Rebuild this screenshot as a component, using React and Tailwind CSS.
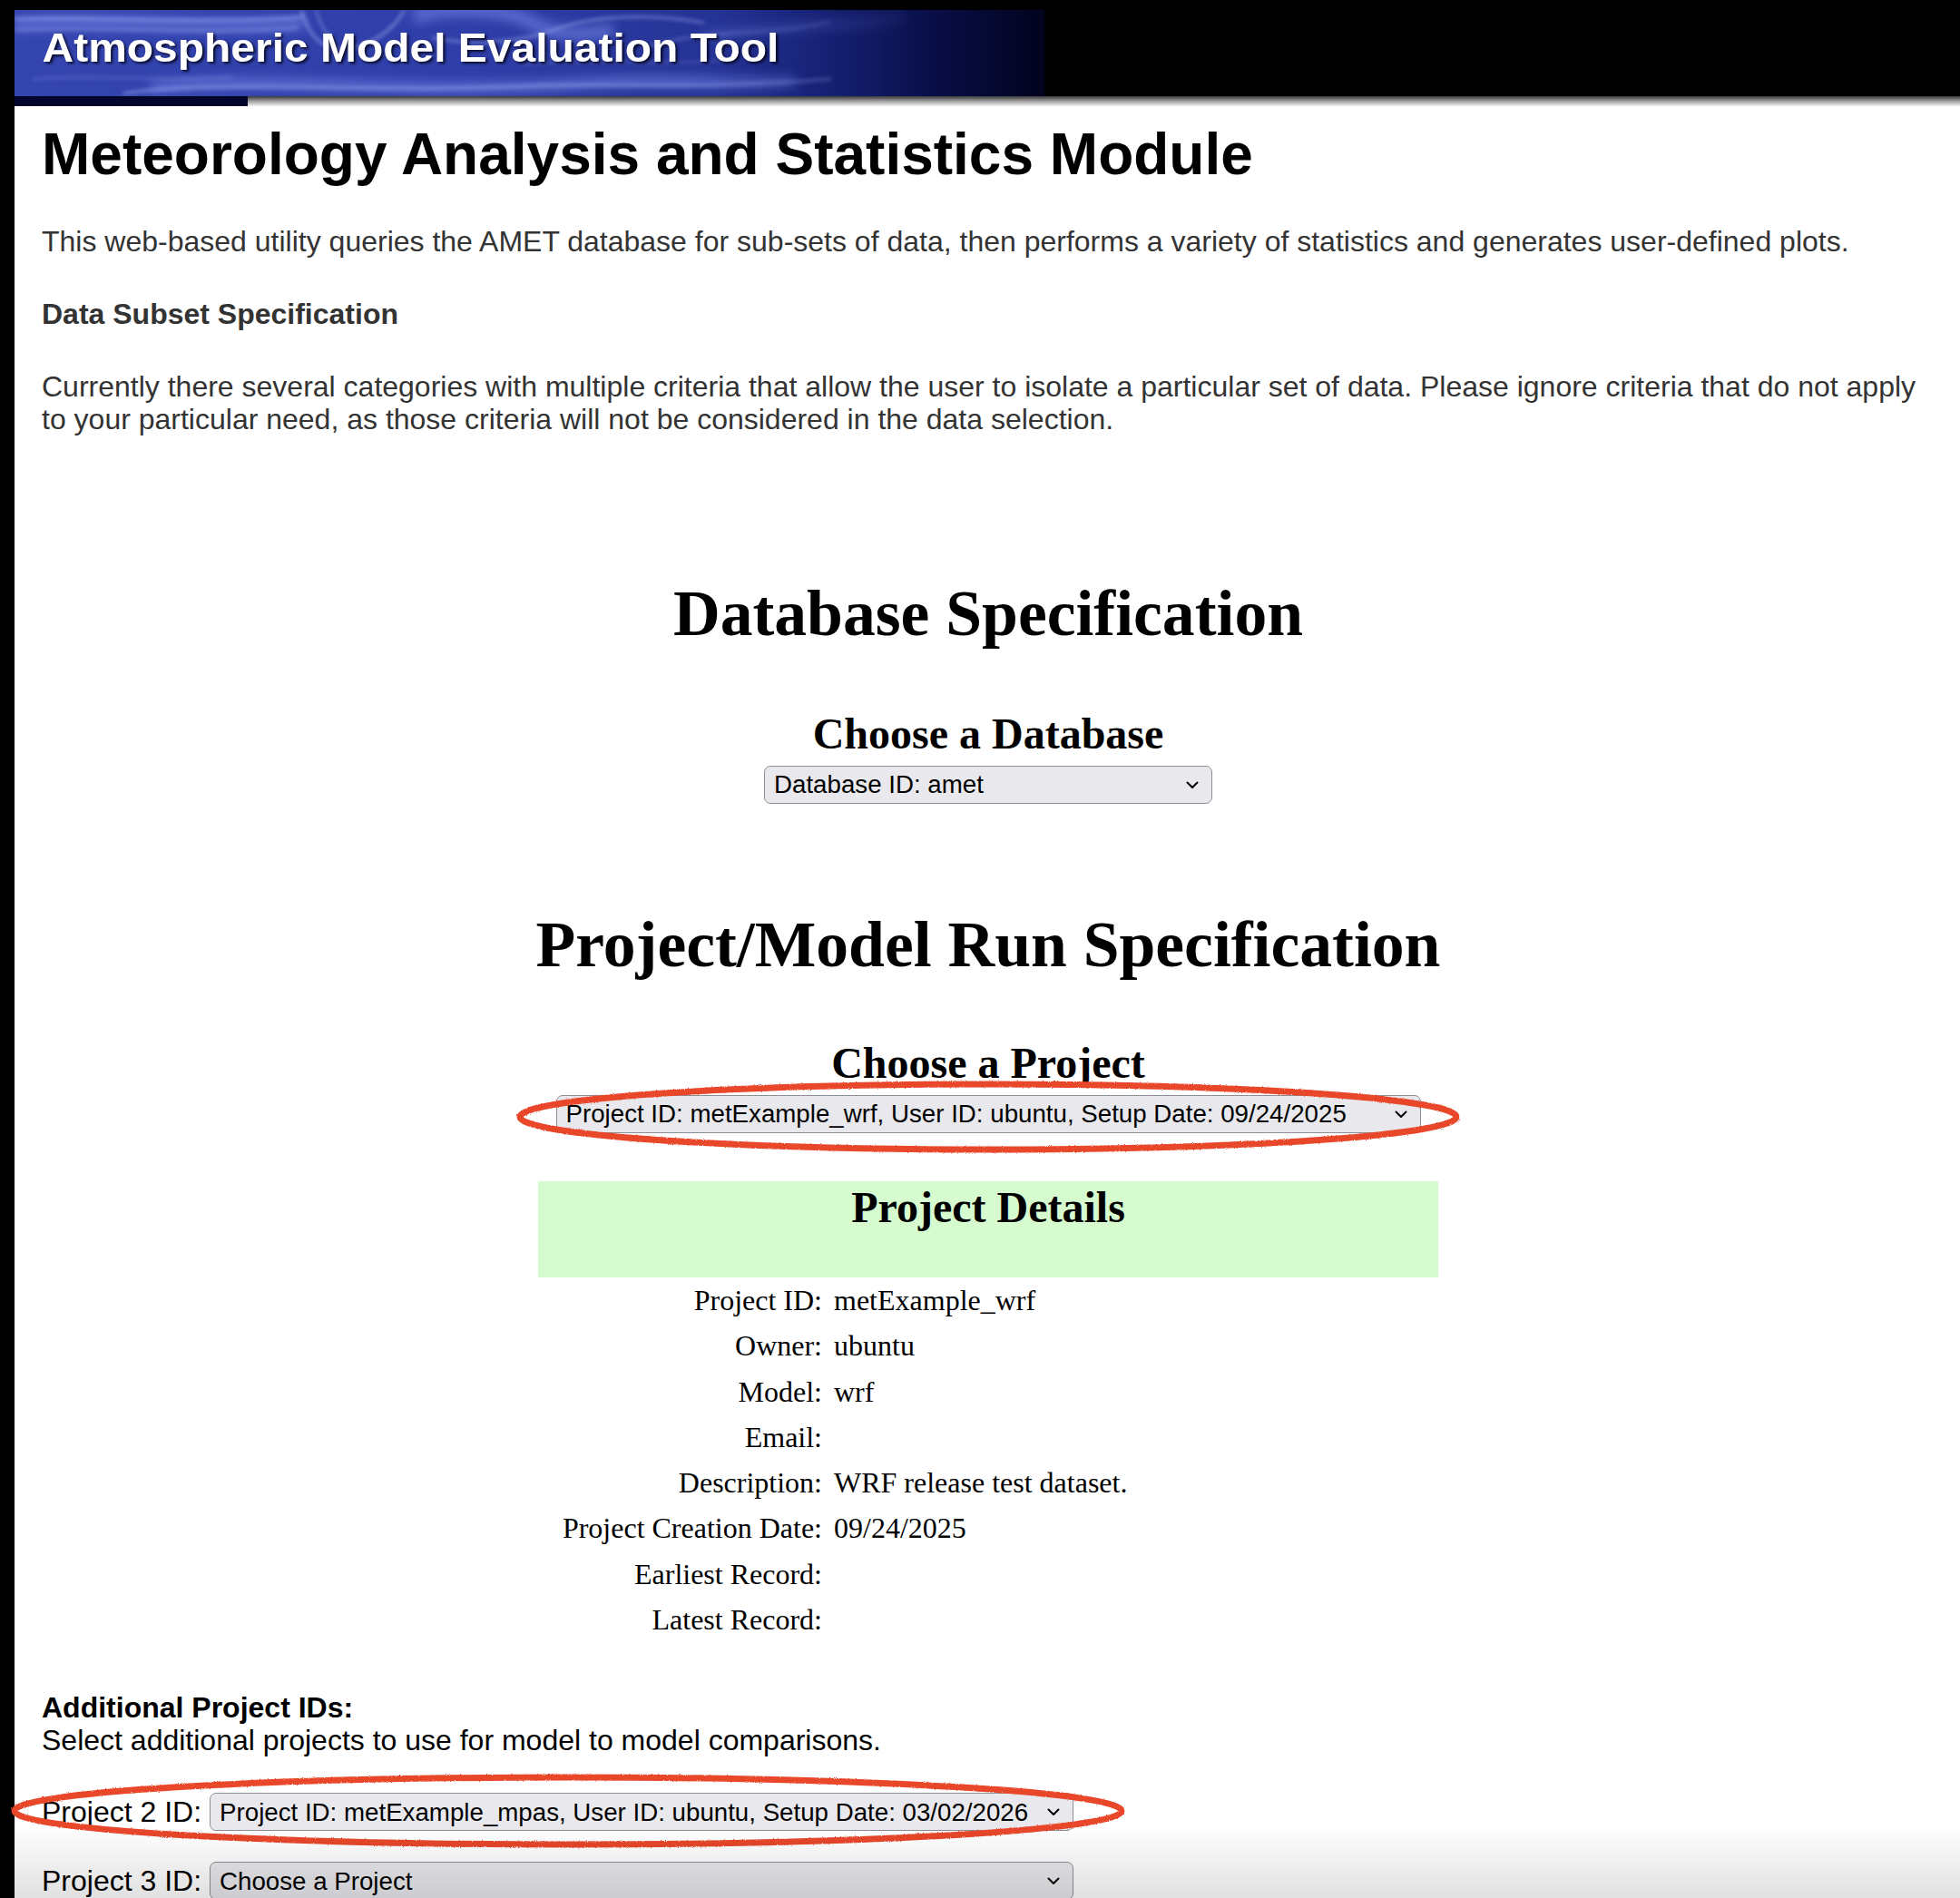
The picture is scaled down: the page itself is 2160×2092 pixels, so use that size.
import React from 'react';

const details = [
  ['Project ID:', 'metExample_wrf'],
  ['Owner:', 'ubuntu'],
  ['Model:', 'wrf'],
  ['Email:', ''],
  ['Description:', 'WRF release test dataset.'],
  ['Project Creation Date:', '09/24/2025'],
  ['Earliest Record:', ''],
  ['Latest Record:', ''],
];

const Select = ({ value, className }) => (
  <div
    className={`flex items-center justify-between h-[42px] rounded-[7px] border-[1.5px] border-[#8e8e96] bg-[#e9e9ed] pl-[10px] pr-[14px] text-[27.7px] leading-none text-black whitespace-nowrap ${className}`}
  >
    <span>{value}</span>
    <svg width="14" height="9" viewBox="0 0 14 9" className="shrink-0">
      <path d="M1.5 1.5 L7 7 L12.5 1.5" fill="none" stroke="#000" strokeWidth="2" strokeLinecap="round" strokeLinejoin="round" />
    </svg>
  </div>
);

// hand drawn red ring used as annotation over the selects
const Ring = ({ id, w, h, className }) => (
  <svg className={`pointer-events-none absolute ${className}`} width={w} height={h} viewBox={`0 0 ${w} ${h}`}>
    <defs>
      <filter id={id} x="-5%" y="-20%" width="110%" height="140%">
        <feTurbulence type="fractalNoise" baseFrequency="1.2" numOctaves="2" seed="3" />
        <feDisplacementMap in="SourceGraphic" scale="2.5" />
      </filter>
    </defs>
    <ellipse
      cx={w / 2}
      cy={h / 2}
      rx={w / 2 - 6}
      ry={h / 2 - 6}
      fill="none"
      stroke="#e8462c"
      strokeWidth="7"
      filter={`url(#${id})`}
    />
  </svg>
);

const Banner = () => (
  <div className="relative w-[1135px] h-[95px] overflow-hidden">
    <svg className="absolute inset-0" width="1135" height="95" viewBox="0 0 1135 95">
      <defs>
        <linearGradient id="bnBase" x1="0" y1="0" x2="1" y2="0">
          <stop offset="0" stopColor="#3445b0" />
          <stop offset="0.45" stopColor="#2f3ea8" />
          <stop offset="0.68" stopColor="#253396" />
          <stop offset="0.8" stopColor="#151f70" />
          <stop offset="0.9" stopColor="#080d44" />
          <stop offset="1" stopColor="#02031e" />
        </linearGradient>
        <linearGradient id="bnFade" x1="0" y1="0" x2="1" y2="0">
          <stop offset="0" stopColor="#fff" />
          <stop offset="0.65" stopColor="#fff" />
          <stop offset="0.88" stopColor="#fff" stopOpacity="0.25" />
          <stop offset="1" stopColor="#fff" stopOpacity="0" />
        </linearGradient>
        <mask id="bnMask">
          <rect width="1135" height="95" fill="url(#bnFade)" />
        </mask>
        <filter id="bnBlur">
          <feGaussianBlur stdDeviation="2.2" />
        </filter>
        <filter id="bnBlurWide">
          <feGaussianBlur stdDeviation="6" />
        </filter>
      </defs>
      <rect width="1135" height="95" fill="url(#bnBase)" />
      <g mask="url(#bnMask)" fill="none">
        <g filter="url(#bnBlurWide)" stroke="#7386e6" strokeOpacity="0.6">
          <path d="M0 16 C90 8 200 22 320 14" strokeWidth="14" />
          <path d="M150 86 C280 70 430 96 640 80 C720 74 800 84 860 78" strokeWidth="12" />
          <path d="M440 8 C470 -4 540 -4 570 14 C590 26 620 30 660 22" strokeWidth="16" />
          <path d="M760 30 C820 16 900 22 980 8" strokeWidth="10" strokeOpacity="0.35" />
        </g>
        <g filter="url(#bnBlur)" stroke="#9eacf2" strokeOpacity="0.6">
          <path d="M0 10 C80 6 190 16 318 8" strokeWidth="3" />
          <path d="M0 22 C100 18 210 28 312 20" strokeWidth="2" />
          <path d="M316 0 C322 18 328 32 344 40 C368 50 410 34 430 0" strokeWidth="3" />
          <path d="M332 0 C336 14 342 26 352 32" strokeWidth="2" />
          <path d="M460 30 C500 40 560 36 600 20 C640 6 700 4 760 14" strokeWidth="2.5" />
          <path d="M120 92 C240 76 380 92 560 84 C660 80 760 88 900 76" strokeWidth="3" />
          <path d="M20 76 C90 70 160 80 240 74" strokeWidth="2" strokeOpacity="0.35" />
          <path d="M700 40 C760 20 840 30 900 12" strokeWidth="2.5" strokeOpacity="0.4" />
          <path d="M560 60 C620 52 700 62 780 56" strokeWidth="2" strokeOpacity="0.3" />
        </g>
      </g>
    </svg>
    <div className="relative pl-[28px] pt-[17px] text-[44px] font-bold leading-[50px] text-white origin-left scale-x-[1.09] whitespace-nowrap [text-shadow:2px_2px_3px_rgba(0,0,20,0.85)]">
      Atmospheric Model Evaluation Tool
    </div>
  </div>
);

export default function App() {
  return (
    <div className="min-h-screen border-l-[16px] border-black bg-white [font-family:'Liberation_Sans',Arial,sans-serif]">
      <header className="bg-black pt-[11px]">
        <Banner />
      </header>
      <div className="flex h-[11px]">
        <div className="w-[257px] bg-[#03052c]" />
        <div className="flex-1 bg-linear-to-b from-[#3a3a3a] via-[#a0a0a0] to-[#f5f5f5]" />
      </div>

      <main className="pl-[30px] pr-[28px] pb-[40px]">
        <h1 className="mt-[16px] text-[64px] font-bold leading-[74px] text-black">
          Meteorology Analysis and Statistics Module
        </h1>
        <p className="mt-[41px] text-[32px] leading-[36px] text-[#333]">
          This web-based utility queries the AMET database for sub-sets of data, then performs a variety of statistics and generates user-defined plots.
        </p>
        <p className="mt-[44px] text-[32px] font-bold leading-[36px] text-[#333]">Data Subset Specification</p>
        <p className="mt-[44px] text-[32px] leading-[36px] text-[#333]">
          Currently there several categories with multiple criteria that allow the user to isolate a particular set of data. Please ignore criteria that do not apply to your particular need, as those criteria will not be considered in the data selection.
        </p>

        <section className="text-center text-black [font-family:'Liberation_Serif','Times_New_Roman',serif]">
          <h2 className="mt-[153px] text-[71.6px] font-bold leading-[86px]">Database Specification</h2>
          <h3 className="mt-[62px] text-[48px] font-bold leading-[55px]">Choose a Database</h3>
        </section>
        <Select value="Database ID: amet" className="mx-auto mt-[8px] w-[494px]" />

        <section className="text-center text-black [font-family:'Liberation_Serif','Times_New_Roman',serif]">
          <h2 className="mt-[112px] text-[71.6px] font-bold leading-[86px]">Project/Model Run Specification</h2>
          <h3 className="mt-[60px] text-[48px] font-bold leading-[55px]">Choose a Project</h3>
        </section>
        <div className="relative mx-auto mt-[8px] w-[953px]">
          <Select value="Project ID: metExample_wrf, User ID: ubuntu, Setup Date: 09/24/2025" className="w-full" />
          <Ring id="ring1" w={1044} h={84} className="left-[-46px] top-[-18px]" />
        </div>

        <div className="mx-auto mt-[53px] w-[992px] text-black [font-family:'Liberation_Serif','Times_New_Roman',serif]">
          <div className="h-[106px] bg-[#d5fbcf] pt-[1px] text-center">
            <h3 className="text-[48px] font-bold leading-[55px]">Project Details</h3>
          </div>
          <div className="grid grid-cols-[313px_1fr] gap-x-[13px] text-[32px] leading-[50.3px]">
            {details.map(([label, value]) => (
              <React.Fragment key={label}>
                <div className="text-right">{label}</div>
                <div>{value || '\u00a0'}</div>
              </React.Fragment>
            ))}
          </div>
        </div>

        <p className="mt-[54px] text-[32px] font-bold leading-[36px] text-black">Additional Project IDs:</p>
        <p className="text-[32px] leading-[36px] text-black">Select additional projects to use for model to model comparisons.</p>

        <div className="relative mt-[40px] flex items-center gap-[9px]">
          <span className="text-[32px] leading-[36px] text-black">Project 2 ID:</span>
          <Select value="Project ID: metExample_mpas, User ID: ubuntu, Setup Date: 03/02/2026" className="w-[952px]" />
          <Ring id="ring2" w={1232} h={86} className="left-[-36px] top-[-23px]" />
        </div>
        <div className="mt-[34px] flex items-center gap-[9px]">
          <span className="text-[32px] leading-[36px] text-black">Project 3 ID:</span>
          <Select value="Choose a Project" className="w-[952px]" />
        </div>
      </main>

      <div className="pointer-events-none fixed inset-x-0 bottom-0 h-[80px] bg-linear-to-b from-transparent to-black/12" />
    </div>
  );
}
